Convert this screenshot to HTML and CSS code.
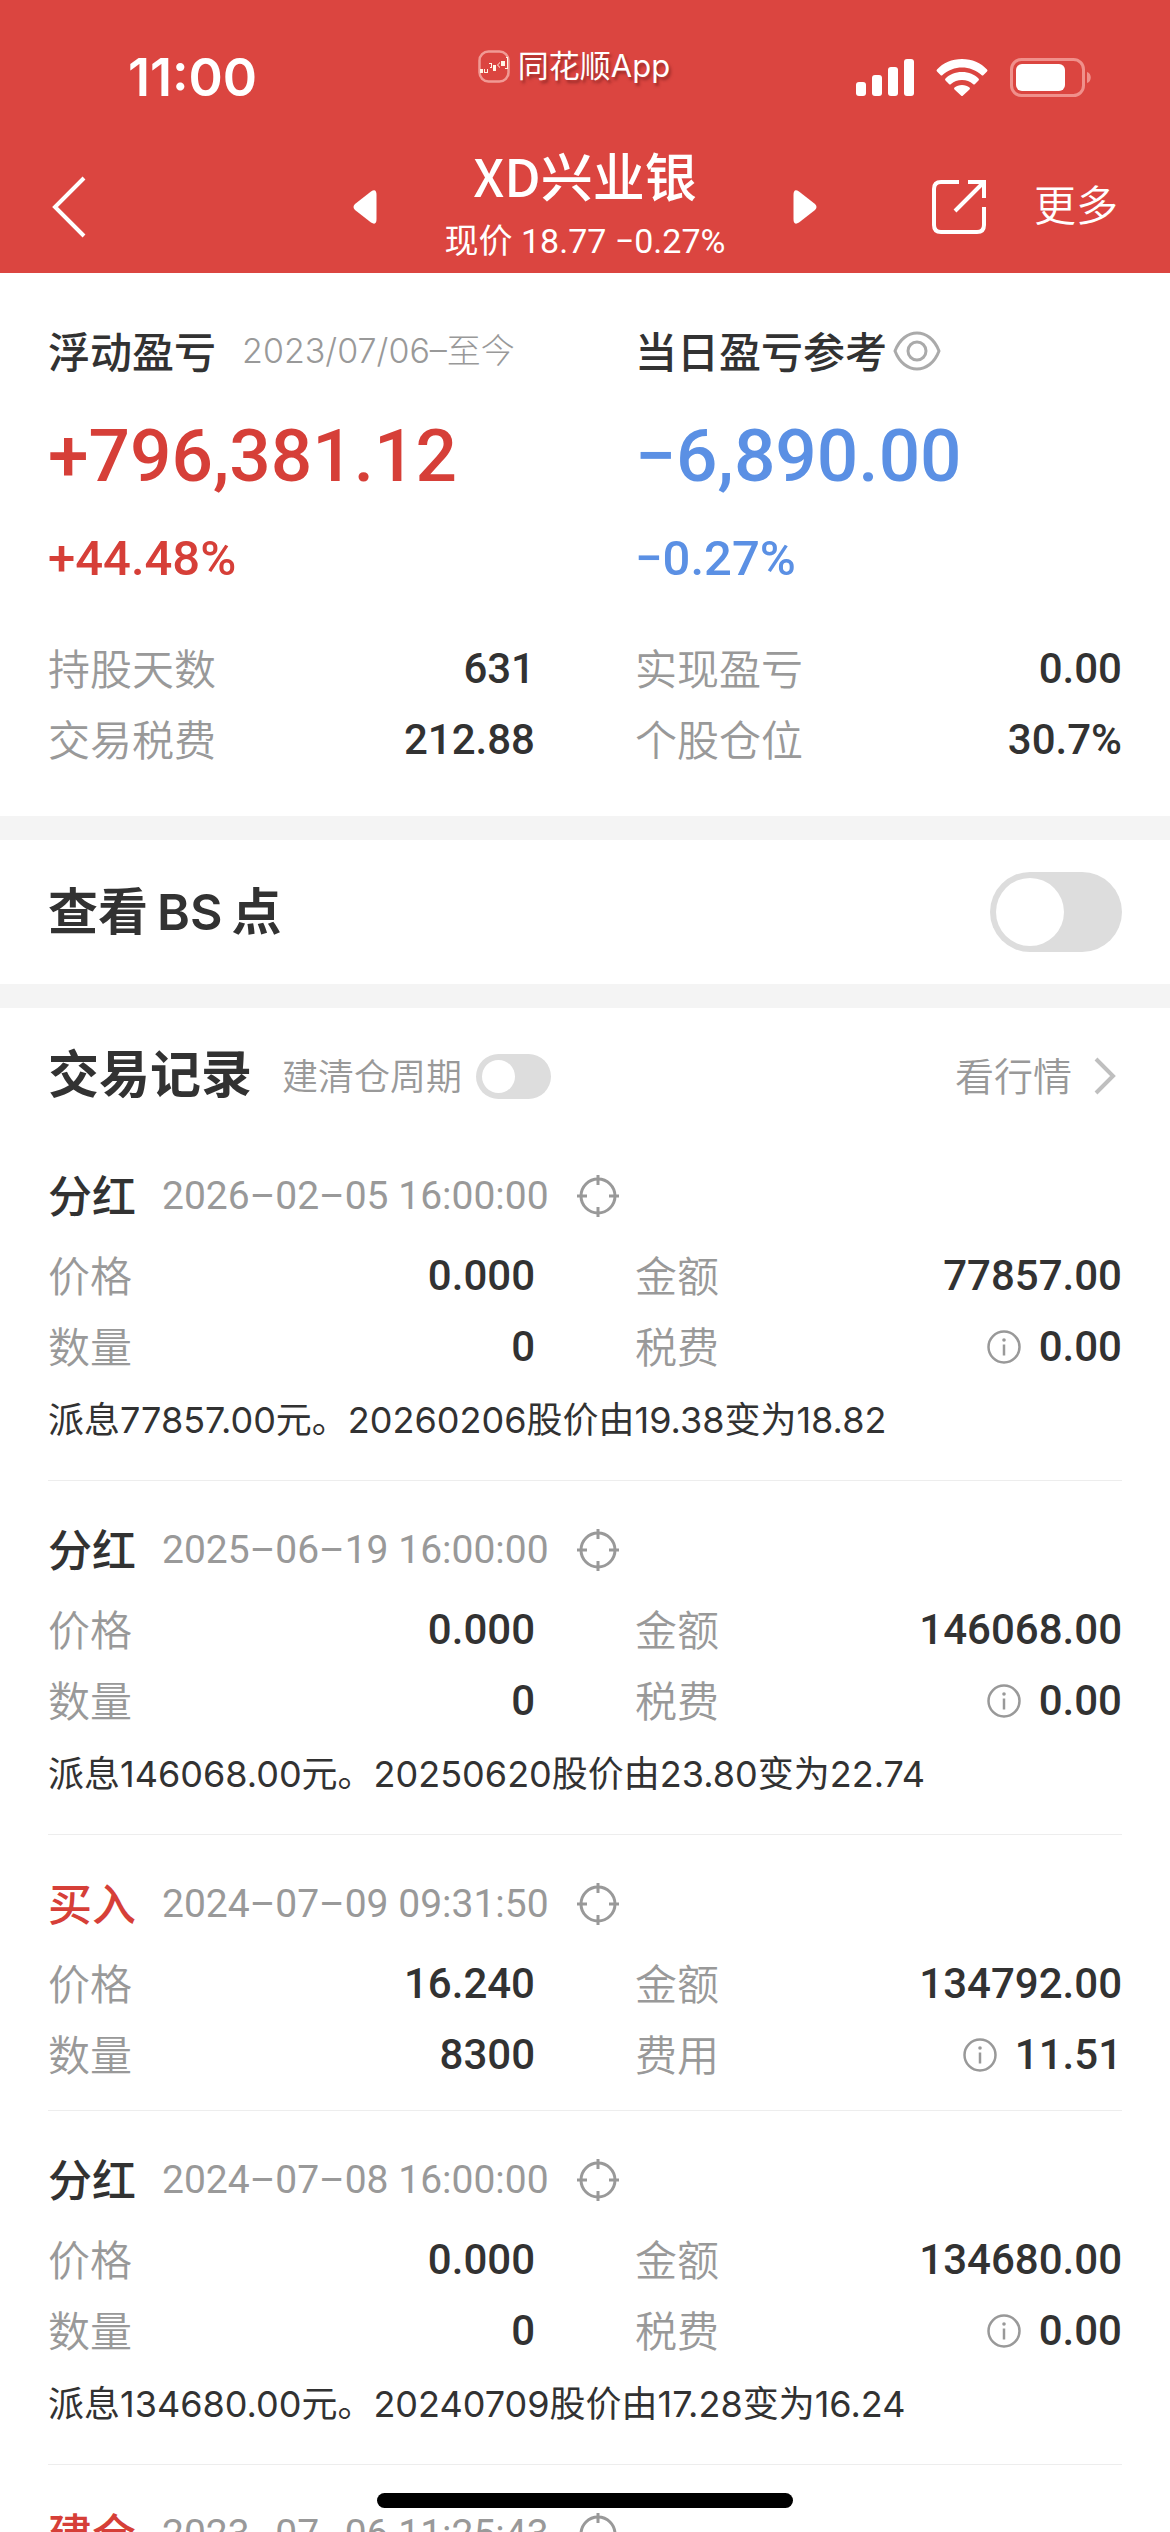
FILE: index.html
```html
<!DOCTYPE html>
<html lang="zh-CN">
<head>
<meta charset="utf-8">
<meta name="viewport" content="width=device-width, initial-scale=1">
<title>XD兴业银</title>
<link rel="stylesheet" href="styles.css">
</head>
<body>
<svg class="sprite" aria-hidden="true">
  <symbol id="target" viewBox="0 0 42 42"><g fill="none" stroke="currentColor" stroke-width="3"><circle cx="21" cy="21" r="17"/><path d="M21 0v10M21 32v10M0 21h10M32 21h10"/></g></symbol>
  <symbol id="info" viewBox="0 0 34 34"><circle cx="17" cy="17" r="15.500" fill="none" stroke="currentColor" stroke-width="2.500"/><path d="M17 14.500v11" stroke="currentColor" stroke-width="2.500"/><circle cx="17" cy="10" r="1.800" fill="currentColor"/></symbol>
</svg>
<div class="app">
  <header class="top">
    <div class="status">
      <time class="clock">11:00</time>
      <div class="source">
        <svg class="source-icon" viewBox="0 0 32 33"><rect x="1.500" y="1.500" width="29" height="30" rx="9" fill="none" stroke="#f19a94" stroke-width="2.500"/><g fill="#fff6e6"><path d="M2 19h3v4H2zM6 19h1v3h2v-3h1v4H6zM11 13h3v5h-2v-1h1v-3h-2zM15 15h3v6h-3zM22 12v1l-2 2 2 2v1l-3-3zM23 11h4v5h-4zM28 7h2v12h-3v-1h2V8h-1z"/></g></svg>
        <span>同花顺App</span>
      </div>
      <div class="indicators">
        <svg class="signal" viewBox="0 0 58 38" fill="#fff"><rect y="23" width="10" height="14" rx="3"/><rect x="16" y="16" width="10" height="21" rx="3"/><rect x="32" y="8" width="10" height="29" rx="3"/><rect x="48" width="10" height="37" rx="3"/></svg>
        <svg class="wifi" viewBox="0 0 52 38" fill="#fff"><path d="M26 0C36 0 45 4 51 10.500q1 1 0 2L47.500 16q-1 1-2 0C40 11 33 8.500 26 8.500S12 11 6.500 16q-1 1-2 0L1 12.500q-1-1 0-2C7 4 16 0 26 0z"/><path d="M26 13c7 0 12.500 2.500 16.500 6.500q1 1 0 2L39 25q-1 1-2 0c-3-2.600-6.600-4-11-4s-8 1.400-11 4q-1 1-2 0l-3.500-3.500q-1-1 0-2C13.500 15.500 19 13 26 13z"/><path d="M26 26c3 0 5.500 1 7.500 2.500q1 1 0 2l-6.500 6q-1 1-2 0l-6.500-6q-1-1 0-2C20.500 27 23 26 26 26z"/></svg>
        <svg class="battery" viewBox="0 0 82 40"><rect x="1.500" y="1.500" width="72" height="36" rx="10" fill="none" stroke="#f0908b" stroke-width="3"/><rect x="6" y="6" width="49" height="27" rx="6" fill="#fff"/><path d="M77 14c5 1 5 10 0 11z" fill="#f0908b"/></svg>
      </div>
    </div>
    <nav class="bar">
      <button class="back" aria-label="返回"><svg viewBox="0 0 34 62"><path d="M32 2L3 31l29 29" fill="none" stroke="#fff" stroke-width="4"/></svg></button>
      <div class="stock">
        <button class="step" aria-label="上一只"><svg viewBox="0 0 24 34"><path d="M18 1.500Q23.500-2 23.500 5v24q0 7-5.500 3.500L2 20q-3-3 0-6z" fill="#fff"/></svg></button>
        <div class="names"><h1>XD兴业银</h1><p>现价 18.77 −0.27%</p></div>
        <button class="step" aria-label="下一只"><svg viewBox="0 0 24 34"><path d="M6 1.500Q.5-2 .5 5v24q0 7 5.500 3.500L22 20q3-3 0-6z" fill="#fff"/></svg></button>
      </div>
      <div class="actions">
        <button class="share" aria-label="分享"><svg viewBox="0 0 54 54" fill="none" stroke="#fff" stroke-width="4"><path d="M27 2H9Q2 2 2 9v36q0 7 7 7h36q7 0 7-7V27M36 2h16v16M51 3L23 31"/></svg></button>
        <button class="more">更多</button>
      </div>
    </nav>
  </header>

  <main>
    <section class="summary">
      <div class="col">
        <div class="caption"><h2>浮动盈亏</h2><span class="period">2023/07/06–至今</span></div>
        <p class="amount up">+796,381.12</p>
        <p class="rate up">+44.48%</p>
        <dl class="facts">
          <div><dt>持股天数</dt><dd>631</dd></div>
          <div><dt>交易税费</dt><dd>212.88</dd></div>
        </dl>
      </div>
      <div class="col">
        <div class="caption"><h2>当日盈亏参考</h2><button class="eye" aria-label="显示或隐藏"><svg viewBox="0 0 48 40" fill="none" stroke="#aaa" stroke-width="3"><path d="M2 20C11-4 37-4 46 20 37 44 11 44 2 20z"/><circle cx="24" cy="20" r="9"/></svg></button></div>
        <p class="amount down">−6,890.00</p>
        <p class="rate down">−0.27%</p>
        <dl class="facts">
          <div><dt>实现盈亏</dt><dd>0.00</dd></div>
          <div><dt>个股仓位</dt><dd>30.7%</dd></div>
        </dl>
      </div>
    </section>

    <section class="bs">
      <label for="bs-switch">查看<span class="latin">BS</span>点</label>
      <input id="bs-switch" class="switch" type="checkbox" role="switch">
    </section>

    <section class="history">
      <div class="history-head">
        <h2>交易记录</h2>
        <label for="cycle-switch">建清仓周期</label>
        <input id="cycle-switch" class="switch small" type="checkbox" role="switch">
        <a href="#quote"><span>看行情</span><svg viewBox="0 0 22 38"><path d="M2 2l17 17L2 36" fill="none" stroke="#bfbfbf" stroke-width="4"/></svg></a>
      </div>

      <article class="record">
        <div class="record-head"><h3>分红</h3><time>2026–02–05 16:00:00</time><svg class="target"><use href="#target"/></svg></div>
        <dl class="facts pair">
          <div><dt>价格</dt><dd>0.000</dd></div><div><dt>金额</dt><dd>77857.00</dd></div>
          <div><dt>数量</dt><dd>0</dd></div><div><dt>税费</dt><dd><svg class="info"><use href="#info"/></svg>0.00</dd></div>
        </dl>
        <p class="note">派息77857.00元。20260206股价由19.38变为18.82</p>
      </article>

      <article class="record">
        <div class="record-head"><h3>分红</h3><time>2025–06–19 16:00:00</time><svg class="target"><use href="#target"/></svg></div>
        <dl class="facts pair">
          <div><dt>价格</dt><dd>0.000</dd></div><div><dt>金额</dt><dd>146068.00</dd></div>
          <div><dt>数量</dt><dd>0</dd></div><div><dt>税费</dt><dd><svg class="info"><use href="#info"/></svg>0.00</dd></div>
        </dl>
        <p class="note">派息146068.00元。20250620股价由23.80变为22.74</p>
      </article>

      <article class="record">
        <div class="record-head"><h3 class="up">买入</h3><time>2024–07–09 09:31:50</time><svg class="target"><use href="#target"/></svg></div>
        <dl class="facts pair">
          <div><dt>价格</dt><dd>16.240</dd></div><div><dt>金额</dt><dd>134792.00</dd></div>
          <div><dt>数量</dt><dd>8300</dd></div><div><dt>费用</dt><dd><svg class="info"><use href="#info"/></svg>11.51</dd></div>
        </dl>
      </article>

      <article class="record">
        <div class="record-head"><h3>分红</h3><time>2024–07–08 16:00:00</time><svg class="target"><use href="#target"/></svg></div>
        <dl class="facts pair">
          <div><dt>价格</dt><dd>0.000</dd></div><div><dt>金额</dt><dd>134680.00</dd></div>
          <div><dt>数量</dt><dd>0</dd></div><div><dt>税费</dt><dd><svg class="info"><use href="#info"/></svg>0.00</dd></div>
        </dl>
        <p class="note">派息134680.00元。20240709股价由17.28变为16.24</p>
      </article>

      <article class="record">
        <div class="record-head"><h3 class="up">建仓</h3><time>2023–07–06 11:25:43</time><svg class="target"><use href="#target"/></svg></div>
      </article>
    </section>
  </main>
  <div class="home-indicator"></div>
</div>
</body>
</html>
```
FILE: styles.css
```css
* { box-sizing: border-box; }

body, h1, h2, h3, p, dl, dd { margin: 0; }

body {
  background: #fff;
  color: #323232;
  font-family: Roboto, "Noto Sans CJK SC", sans-serif;
}

button {
  display: block;
  margin: 0;
  padding: 0;
  border: 0;
  background: none;
  color: inherit;
  font: inherit;
}

svg { display: block; }

.sprite { position: absolute; width: 0; height: 0; }

.app {
  display: flex;
  flex-direction: column;
  height: 100vh;
  overflow: hidden;
}

.up { color: #d63f38; }
.down { color: #5b90e4; }

/* header */
.top {
  flex: none;
  padding-bottom: 6px;
  background: #db4540;
  color: #fff;
}

.status {
  display: grid;
  grid-template-columns: 1fr auto 1fr;
  align-items: center;
  height: 147px;
  padding: 8px 78px 0 128px;
}

.clock {
  font: 600 52px/60px Inter, sans-serif;
}

.source {
  display: flex;
  gap: 8px;
  align-items: center;
  align-self: start;
  margin: 34px 72px 0 0;
  font: 31px/48px Inter, "Noto Sans CJK SC", sans-serif;
  text-shadow: 2px 3px 3px rgba(90, 20, 20, 0.5);
}

.source-icon { width: 32px; height: 33px; }

.indicators {
  display: flex;
  justify-content: flex-end;
  align-items: center;
  gap: 22px;
}

.signal { width: 58px; height: 38px; }
.wifi { width: 52px; height: 38px; }
.battery { width: 82px; height: 40px; }

.bar {
  display: grid;
  grid-template-columns: 1fr auto 1fr;
  align-items: center;
  height: 120px;
  padding: 0 52px;
}

.back svg { width: 34px; height: 62px; }

.stock {
  display: flex;
  align-items: center;
  gap: 68px;
}

.step svg { width: 24px; height: 34px; }

.names { text-align: center; }

.names h1 {
  margin-bottom: 12px;
  font: 500 52px/56px "Noto Sans CJK SC", sans-serif;
}

.names p {
  font-size: 34px;
  line-height: 52px;
}

.actions {
  display: flex;
  align-items: center;
  justify-content: flex-end;
  gap: 48px;
}

.share svg { width: 54px; height: 54px; }

.more { font-size: 42px; font-weight: 350; line-height: 60px; }

/* summary */
.summary {
  display: grid;
  grid-template-columns: 1fr 1fr;
  gap: 100px;
  padding: 48px 48px 41px;
  border-bottom: 24px solid #f4f4f4;
}

.caption {
  display: flex;
  align-items: center;
  height: 60px;
  white-space: nowrap;
}

.caption h2 { padding-bottom: 4px; font-size: 42px; font-weight: 500; }

.period {
  margin-left: 26px;
  color: #999;
  font: 300 34px/48px Inter, "Noto Sans CJK SC", sans-serif;
}

.eye { margin-left: 6px; }
.eye svg { width: 48px; height: 40px; }

.amount {
  margin-top: 30px;
  font-size: 73px;
  font-weight: 500;
  line-height: 90px;
}

.rate {
  margin-top: 28px;
  font-size: 49px;
  font-weight: 500;
  line-height: 60px;
}

.col .facts { margin-top: 44px; }

.facts > div {
  display: flex;
  justify-content: space-between;
  align-items: center;
  height: 71px;
}

.facts dt {
  padding-bottom: 4px;
  color: #999;
  font-size: 42px;
  font-weight: 350;
}

.facts dd {
  display: flex;
  align-items: center;
  gap: 18px;
  font-size: 42px;
  font-weight: 500;
}

.info { width: 34px; height: 34px; color: #999; }

/* switches */
.bs {
  display: flex;
  justify-content: space-between;
  align-items: center;
  height: 168px;
  padding: 0 48px;
  border-bottom: 24px solid #f4f4f4;
}

.bs label {
  font: 600 50px/70px Inter, "Noto Sans CJK SC", sans-serif;
}

.latin { margin: 0 9px; }

.switch {
  flex: none;
  appearance: none;
  display: flex;
  align-items: center;
  width: 132px;
  height: 80px;
  margin: 0;
  padding: 6px;
  border-radius: 40px;
  background: #ddd;
}

.switch::before {
  content: "";
  height: 100%;
  aspect-ratio: 1;
  border-radius: 50%;
  background: #fff;
}

.switch.small { width: 75px; height: 45px; }

/* records */
.history { padding: 0 48px; }

.history-head {
  display: flex;
  align-items: center;
  height: 119px;
  padding: 42px 0 25px;
}

.history-head h2 { font-size: 51px; font-weight: 700; line-height: 52px; }

.history-head label {
  margin: 0 14px 0 30px;
  padding-bottom: 4px;
  color: #999;
  font-size: 36px;
  font-weight: 350;
}

.history-head a {
  display: flex;
  align-items: center;
  gap: 22px;
  margin-left: auto;
  padding-right: 6px;
  color: #999;
  font-size: 39px;
  font-weight: 350;
  text-decoration: none;
}

.history-head a span { padding-bottom: 4px; }
.history-head a svg { width: 22px; height: 38px; }

.record {
  padding: 44px 0 20px;
  border-bottom: 1px solid #ededed;
}

.record-head {
  display: flex;
  align-items: center;
  height: 50px;
  margin-bottom: 19px;
}

.record-head h3 { padding-bottom: 4px; font-size: 44px; font-weight: 500; }

.record-head time {
  margin: 0 28px 0 26px;
  color: #999;
  font-size: 39px;
}

.target { width: 42px; height: 42px; color: #999; }

.pair {
  display: grid;
  grid-template-columns: 1fr 1fr;
  column-gap: 100px;
}

.note {
  margin: 14px 0 16px;
  font: 36px/48px Inter, "Noto Sans CJK SC", sans-serif;
}

.home-indicator {
  position: fixed;
  bottom: 24px;
  left: 50%;
  width: 416px;
  height: 15px;
  margin-left: -208px;
  border-radius: 8px;
  background: #000;
}
```
